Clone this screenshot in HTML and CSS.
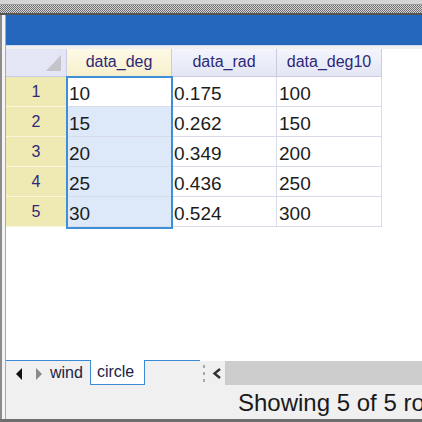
FILE: index.html
```html
<!DOCTYPE html>
<html>
<head>
<meta charset="utf-8">
<link rel="stylesheet" href="styles.css">
</head>
<body>
<div class="app">
  <div class="topbar">
    <div class="tb-light"></div>
    <div class="tb-line"></div>
    <div class="tb-grip"></div>
    <div class="tb-dark"></div>
  </div>
  <div class="main">
    <div class="leftborder"></div>
    <div class="content">
      <div class="bluebar"></div>
      <div class="gapline"></div>
      <div class="gapband"></div>
      <div class="gridwrap">
        <div class="grid">
          <div class="hcell corner"><span class="tri"></span></div>
          <div class="hcell hsel">data_deg</div>
          <div class="hcell">data_rad</div>
          <div class="hcell">data_deg10</div>

          <div class="rnum">1</div>
          <div class="cell cur">10</div>
          <div class="cell">0.175</div>
          <div class="cell">100</div>

          <div class="rnum">2</div>
          <div class="cell sel">15</div>
          <div class="cell">0.262</div>
          <div class="cell">150</div>

          <div class="rnum">3</div>
          <div class="cell sel">20</div>
          <div class="cell">0.349</div>
          <div class="cell">200</div>

          <div class="rnum">4</div>
          <div class="cell sel">25</div>
          <div class="cell">0.436</div>
          <div class="cell">250</div>

          <div class="rnum">5</div>
          <div class="cell sel">30</div>
          <div class="cell">0.524</div>
          <div class="cell">300</div>
        </div>
        <div class="selbox"></div>
      </div>
      <div class="empty"></div>
      <div class="tabbar">
        <div class="tabs">
          <span class="arrow left"></span>
          <span class="arrow right"></span>
          <span class="tab first">wind</span>
          <span class="tab active">circle</span>
        </div>
        <div class="splitter"><i></i><i></i><i></i></div>
        <div class="chev">
          <svg width="10" height="11" viewBox="0 0 10 11"><path d="M8 1 L2.5 5.5 L8 10" fill="none" stroke="#333" stroke-width="2.4"/></svg>
        </div>
        <div class="track"></div>
      </div>
      <div class="status"><span>Showing 5 of 5 rows</span></div>
    </div>
  </div>
  <div class="bottomline"></div>
</div>
</body>
</html>
```

FILE: styles.css
```css
html, body {
  margin: 0;
  padding: 0;
  width: 422px;
  height: 422px;
  overflow: hidden;
  background: #ffffff;
  font-family: "Liberation Sans", Arial, sans-serif;
}
.app {
  display: flex;
  flex-direction: column;
  width: 422px;
  height: 422px;
}
.topbar {
  display: flex;
  flex-direction: column;
  flex: 0 0 15px;
}
.tb-light { height: 4px; background: #d4d4d4; }
.tb-line { height: 1px; background: #9a9a9a; }
.tb-grip {
  height: 8px;
  background: repeating-conic-gradient(#6f6f6f 0 25%, #d6d6d6 0 50%) 0 0 / 2px 2px;
}
.tb-dark { height: 2px; background: #555555; }

.main {
  flex: 1;
  display: flex;
  min-height: 0;
}
.leftborder {
  flex: 0 0 6px;
  background: linear-gradient(to right, #8c8c8c 0 2px, #f4f4f4 2px 5px, #a8a8a8 5px 6px);
}
.content {
  flex: 1;
  display: flex;
  flex-direction: column;
  min-width: 0;
}
.bluebar { flex: 0 0 30px; background: #2467bd; }
.gapline { flex: 0 0 1px; background: #cddcf0; }
.gapband { flex: 0 0 3px; background: #f0f0f0; }

.gridwrap {
  position: relative;
  flex: 0 0 auto;
}
.grid {
  display: grid;
  grid-template-columns: 61px 105px 105px 105px;
  grid-template-rows: 28px repeat(5, 30px);
}
.hcell {
  box-sizing: border-box;
  border-right: 1px solid #c9cce2;
  border-bottom: 1px solid #c9cce2;
  background: linear-gradient(#f3f4fc, #e4e6f5);
  color: #2e2878;
  font-size: 16px;
  display: flex;
  align-items: center;
  justify-content: center;
  padding-bottom: 1px;
}
.hcell.corner {
  position: relative;
  background: #e4e6f6;
}
.tri {
  position: absolute;
  right: 5px;
  bottom: 5px;
  width: 15px;
  height: 16px;
  background: #c4c4ca;
  clip-path: polygon(100% 0, 100% 100%, 0 100%);
}
.hcell.hsel {
  background: linear-gradient(#fdf9e6, #f8f0cc);
}
.rnum {
  box-sizing: border-box;
  background: #efe9b3;
  border-right: 1px solid #d7d3a4;
  border-bottom: 1px solid #faf6dc;
  color: #2e2878;
  font-size: 16px;
  display: flex;
  align-items: center;
  justify-content: center;
  padding-top: 1px;
}
.cell {
  box-sizing: border-box;
  border-right: 1px solid #d8dcea;
  border-bottom: 1px solid #d8dcea;
  background: #ffffff;
  color: #1c1c1c;
  font-size: 19px;
  display: flex;
  align-items: center;
  padding-left: 2px;
  padding-top: 4px;
}
.cell.sel { background: #dde9f8; }
.cell.cur { background: #ffffff; }
.selbox {
  position: absolute;
  left: 60px;
  top: 27px;
  width: 103px;
  height: 149px;
  border: 2px solid #3d8fd9;
  pointer-events: none;
}
.empty {
  flex: 1;
  background: #ffffff;
}
.tabbar {
  flex: 0 0 24px;
  display: flex;
  align-items: stretch;
  background: #f0f0f0;
}
.tabs {
  flex: 0 0 194px;
  display: flex;
  align-items: center;
  border-top: 1px solid #3a8ad8;
  box-sizing: border-box;
  position: relative;
}
.arrow {
  width: 0;
  height: 0;
  border-top: 6px solid transparent;
  border-bottom: 6px solid transparent;
  margin-top: 1px;
}
.arrow.left {
  border-right: 6px solid #111111;
  margin-left: 10px;
}
.arrow.right {
  border-left: 6px solid #8a8a8a;
  margin-left: 14px;
}
.tab {
  font-size: 16px;
  color: #1c1c48;
  height: 100%;
  display: flex;
  align-items: center;
  box-sizing: border-box;
  padding-bottom: 1px;
}
.tab.first {
  margin-left: 8px;
}
.tab.active {
  background: #ffffff;
  border: 1px solid #3a8ad8;
  border-top: none;
  margin-top: -1px;
  height: 25px;
  margin-left: 7px;
  padding: 0 7px 1px 6px;
  width: 55px;
}
.splitter {
  flex: 0 0 8px;
  display: flex;
  flex-direction: column;
  justify-content: center;
  align-items: center;
  gap: 4px;
  background: #f0f0f0;
  border-top: 1px solid #ffffff;
  box-sizing: border-box;
}
.splitter i {
  display: block;
  width: 2px;
  height: 3px;
  background: #a8a8a8;
}
.chev {
  flex: 0 0 17px;
  display: flex;
  align-items: center;
  justify-content: center;
  border-top: 1px solid #ffffff;
  box-sizing: border-box;
  padding-top: 1px;
}
.track {
  flex: 1;
  background: #cdcdcd;
  border-top: 1px solid #ffffff;
  box-sizing: border-box;
}
.status {
  flex: 0 0 34px;
  background: #f0f0f0;
  overflow: hidden;
  white-space: nowrap;
  display: flex;
  align-items: center;
  padding-left: 232px;
}
.status span {
  font-size: 24px;
  color: #1a1a1a;
  padding-top: 2px;
}
.bottomline {
  flex: 0 0 3px;
  background: #6e6e6e;
}
```
